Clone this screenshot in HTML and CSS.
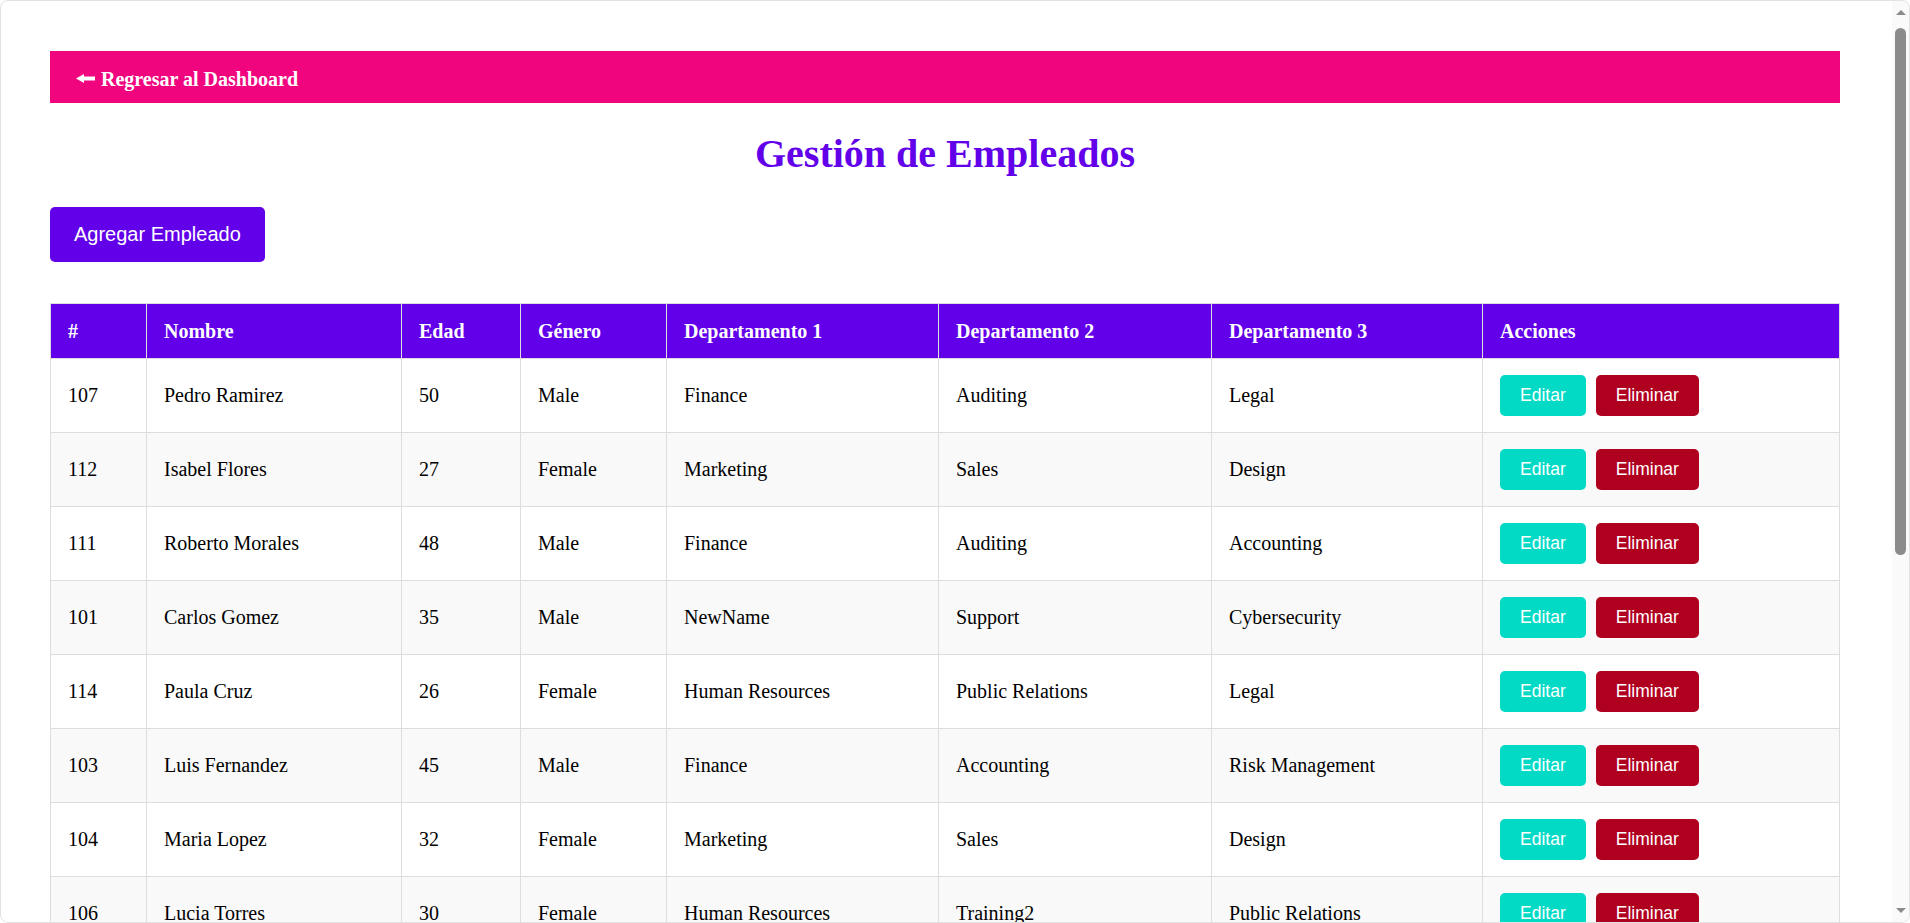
FILE: index.html
```html
<!DOCTYPE html>
<html lang="es">
<head>
<meta charset="utf-8">
<title>Gestión de Empleados</title>
<link rel="stylesheet" href="styles.css">
</head>
<body>
<div class="frame"></div>
<div class="scrollbar" aria-hidden="true">
  <span class="sb-arrow sb-up"></span>
  <span class="sb-thumb"></span>
  <span class="sb-arrow sb-down"></span>
</div>
<div class="page">
  <nav class="topbar">
    <a class="back-link" href="#">
      <svg class="back-arrow" width="19" height="9" viewBox="0 0 19 9" aria-hidden="true"><polygon points="0,4.5 8,0 8,2.5 19,2.5 19,6.5 8,6.5 8,9" fill="#fff"/></svg>
      <span>Regresar al Dashboard</span>
    </a>
  </nav>
  <h1 class="title">Gestión de Empleados</h1>
  <div class="toolbar">
    <button class="btn-add" type="button">Agregar Empleado</button>
  </div>
  <table class="emp-table">
    <thead>
      <tr>
        <th class="c-id">#</th>
        <th class="c-name">Nombre</th>
        <th class="c-age">Edad</th>
        <th class="c-gender">Género</th>
        <th class="c-dep1">Departamento 1</th>
        <th class="c-dep2">Departamento 2</th>
        <th class="c-dep3">Departamento 3</th>
        <th class="c-act">Acciones</th>
      </tr>
    </thead>
    <tbody>
      <tr><td>107</td><td>Pedro Ramirez</td><td>50</td><td>Male</td><td>Finance</td><td>Auditing</td><td>Legal</td><td><div class="actions"><button class="btn-edit" type="button">Editar</button><button class="btn-del" type="button">Eliminar</button></div></td></tr>
      <tr><td>112</td><td>Isabel Flores</td><td>27</td><td>Female</td><td>Marketing</td><td>Sales</td><td>Design</td><td><div class="actions"><button class="btn-edit" type="button">Editar</button><button class="btn-del" type="button">Eliminar</button></div></td></tr>
      <tr><td>111</td><td>Roberto Morales</td><td>48</td><td>Male</td><td>Finance</td><td>Auditing</td><td>Accounting</td><td><div class="actions"><button class="btn-edit" type="button">Editar</button><button class="btn-del" type="button">Eliminar</button></div></td></tr>
      <tr><td>101</td><td>Carlos Gomez</td><td>35</td><td>Male</td><td>NewName</td><td>Support</td><td>Cybersecurity</td><td><div class="actions"><button class="btn-edit" type="button">Editar</button><button class="btn-del" type="button">Eliminar</button></div></td></tr>
      <tr><td>114</td><td>Paula Cruz</td><td>26</td><td>Female</td><td>Human Resources</td><td>Public Relations</td><td>Legal</td><td><div class="actions"><button class="btn-edit" type="button">Editar</button><button class="btn-del" type="button">Eliminar</button></div></td></tr>
      <tr><td>103</td><td>Luis Fernandez</td><td>45</td><td>Male</td><td>Finance</td><td>Accounting</td><td>Risk Management</td><td><div class="actions"><button class="btn-edit" type="button">Editar</button><button class="btn-del" type="button">Eliminar</button></div></td></tr>
      <tr><td>104</td><td>Maria Lopez</td><td>32</td><td>Female</td><td>Marketing</td><td>Sales</td><td>Design</td><td><div class="actions"><button class="btn-edit" type="button">Editar</button><button class="btn-del" type="button">Eliminar</button></div></td></tr>
      <tr><td>106</td><td>Lucia Torres</td><td>30</td><td>Female</td><td>Human Resources</td><td>Training2</td><td>Public Relations</td><td><div class="actions"><button class="btn-edit" type="button">Editar</button><button class="btn-del" type="button">Eliminar</button></div></td></tr>
    </tbody>
  </table>
</div>
</body>
</html>
```

FILE: styles.css
```css
* {
  box-sizing: border-box;
}

html {
  background: #ffffff;
}

body {
  margin: 0;
  background: #ffffff;
  font-family: "Liberation Serif", "Times New Roman", serif;
  font-size: 20px;
  color: #000000;
}

.frame {
  position: fixed;
  top: 0;
  left: 0;
  bottom: 0;
  right: 0;
  border: 1px solid #e2e2e2;
  border-radius: 8px;
  pointer-events: none;
  z-index: 10;
}

.scrollbar {
  position: fixed;
  top: 1px;
  right: 1px;
  bottom: 1px;
  width: 17px;
  background: #fafafa;
  border-radius: 0 8px 8px 0;
  z-index: 9;
}

.sb-thumb {
  position: absolute;
  top: 27px;
  left: 3px;
  width: 11px;
  height: 527px;
  border-radius: 6px;
  background: #8b8b8b;
}

.sb-arrow {
  position: absolute;
  left: 4px;
  width: 0;
  height: 0;
  border-left: 5px solid transparent;
  border-right: 5px solid transparent;
}

.sb-up {
  top: 9px;
  border-bottom: 5px solid #8b8b8b;
}

.sb-down {
  bottom: 9px;
  border-top: 5px solid #8b8b8b;
}

.page {
  padding: 51px 70px 50px 50px;
}

.topbar {
  display: flex;
  align-items: center;
  height: 52px;
  padding: 0 26px;
  background: #f0057f;
}

.back-link {
  display: inline-flex;
  align-items: center;
  gap: 6px;
  color: #ffffff;
  font-weight: bold;
  font-size: 20px;
  text-decoration: none;
  padding-top: 5px;
}

.back-arrow {
  display: block;
  margin-top: -3px;
}

.title {
  margin: 29px 0 31px;
  font-size: 40px;
  line-height: 44px;
  font-weight: bold;
  text-align: center;
  color: #6200ea;
}

.toolbar {
  margin-bottom: 41px;
}

.btn-add {
  display: inline-block;
  height: 55px;
  padding: 0 24px;
  border: none;
  border-radius: 5px;
  background: #6200ea;
  color: #ffffff;
  font-family: "Liberation Sans", Arial, sans-serif;
  font-size: 20px;
  cursor: pointer;
}

.emp-table {
  width: 100%;
  border-collapse: collapse;
  table-layout: fixed;
}

.emp-table th,
.emp-table td {
  border: 1px solid #dddddd;
  padding: 16px 17px;
  text-align: left;
  vertical-align: middle;
}

.emp-table th {
  background: #6200ea;
  color: #ffffff;
  font-weight: bold;
  height: 55px;
  line-height: 22px;
}

.emp-table td {
  height: 74px;
}

.emp-table tbody tr:nth-child(even) td {
  background: #f9f9f9;
}

.c-id { width: 96px; }
.c-name { width: 255px; }
.c-age { width: 119px; }
.c-gender { width: 146px; }
.c-dep1 { width: 272px; }
.c-dep2 { width: 273px; }
.c-dep3 { width: 271px; }

.actions {
  display: flex;
  gap: 10px;
}

.btn-edit,
.btn-del {
  height: 41px;
  padding: 0 20px;
  border: none;
  border-radius: 5px;
  color: #ffffff;
  font-family: "Liberation Sans", Arial, sans-serif;
  font-size: 17.5px;
  cursor: pointer;
}

.btn-edit {
  background: #03dac6;
}

.btn-del {
  background: #b00020;
}
```
